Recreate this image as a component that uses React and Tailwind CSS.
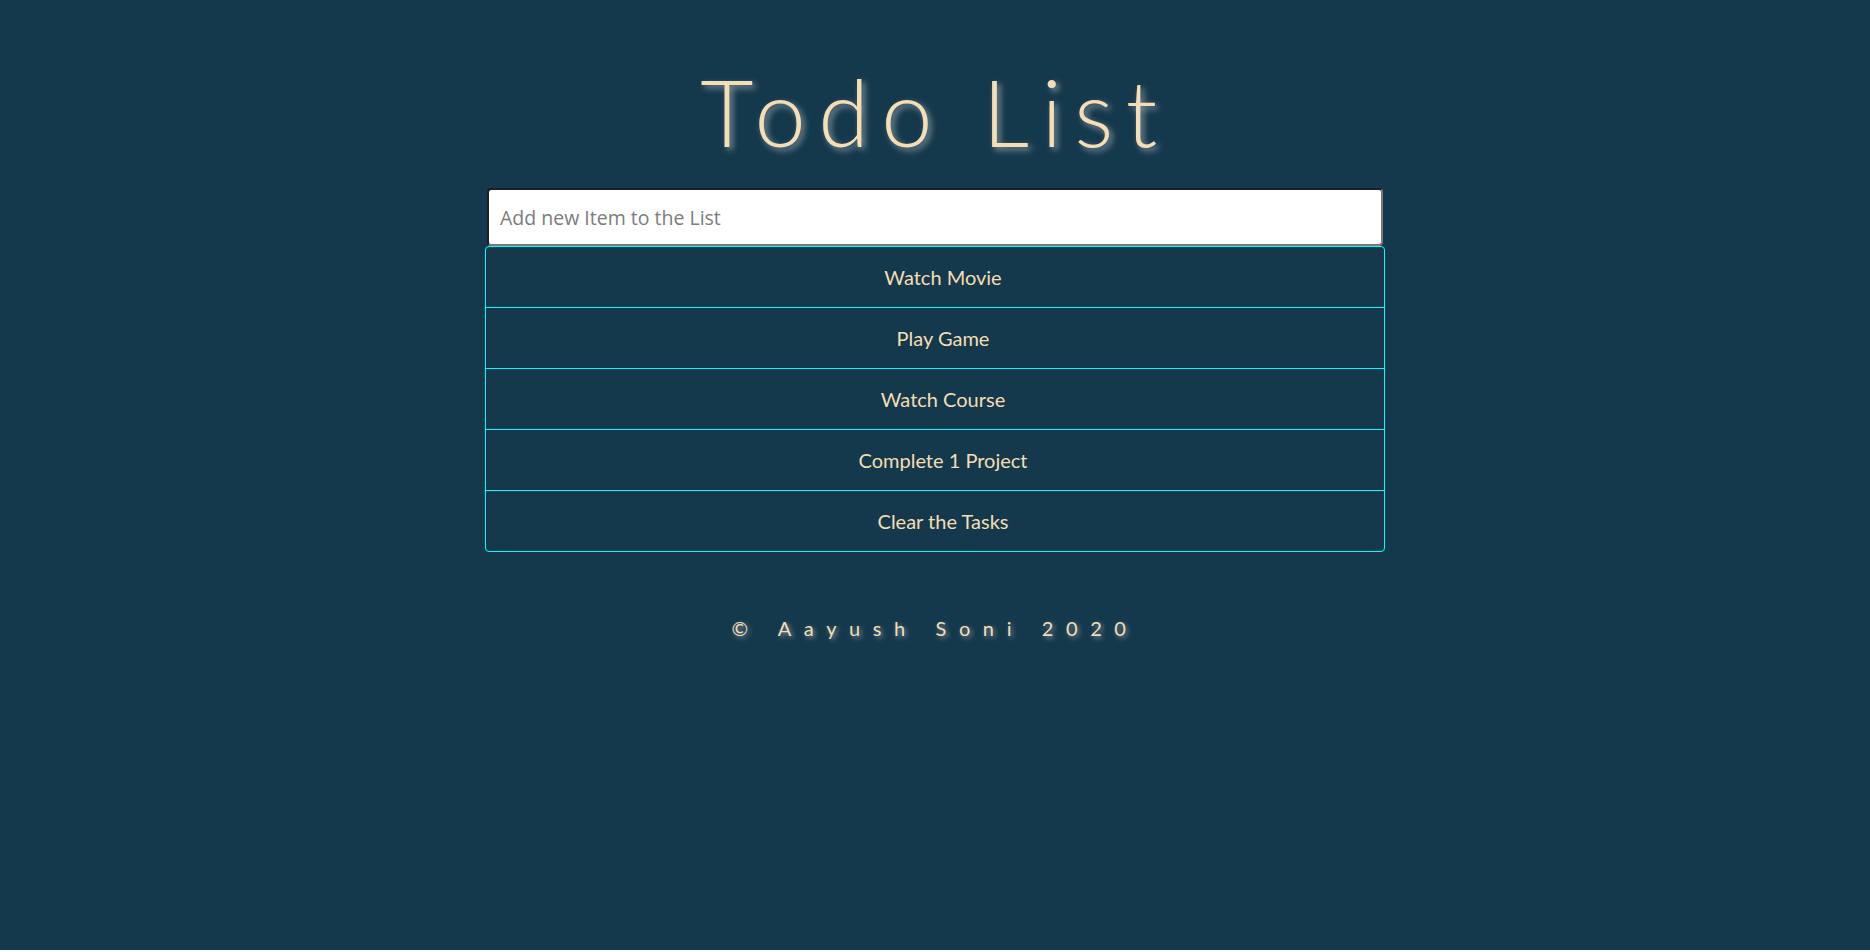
const TASKS = ['Watch Movie', 'Play Game', 'Watch Course', 'Complete 1 Project', 'Clear the Tasks'];

function App() {
  return (
    <div className="h-[950px] bg-[#14384c] font-['Lato',sans-serif] text-[#f5deb3]">
      <div className="flex flex-col items-center pt-[66px]">
        <h1 className="text-[92px] font-light leading-none tracking-[0.135em] [text-shadow:3px_3px_6px_#8a9aa4]">
          Todo List
        </h1>
        <div className="mt-[30px] w-[900px]">
          <input
            type="text"
            placeholder="Add new Item to the List"
            className="mx-[2px] block h-[58px] w-[896px] rounded-[4px] border-2 border-t-[#1f1f1f] border-l-[#1f1f1f] border-r-[#7a7a7a] border-b-[#7a7a7a] bg-white px-[11px] font-['Open_Sans',sans-serif] text-[19.5px] text-gray-700 outline-none placeholder:text-[#7c7c7c]"
          />
          {/* task list */}
          <ul className="rounded-[4px] border border-[#00ffff]">
            {TASKS.map((task, i) => (
              <li
                key={task}
                className={`flex h-[60px] items-center justify-center pl-4 text-[20px] ${i > 0 ? 'border-t border-[#00ffff] h-[61px]' : ''}`}
              >
                {task}
              </li>
            ))}
          </ul>
        </div>
        <p className="mt-[61px] text-[20px] tracking-[0.63em] [text-shadow:2px_2px_5px_#8a9aa4]">
          © Aayush Soni 2020
        </p>
      </div>
    </div>
  );
}

export default App;
